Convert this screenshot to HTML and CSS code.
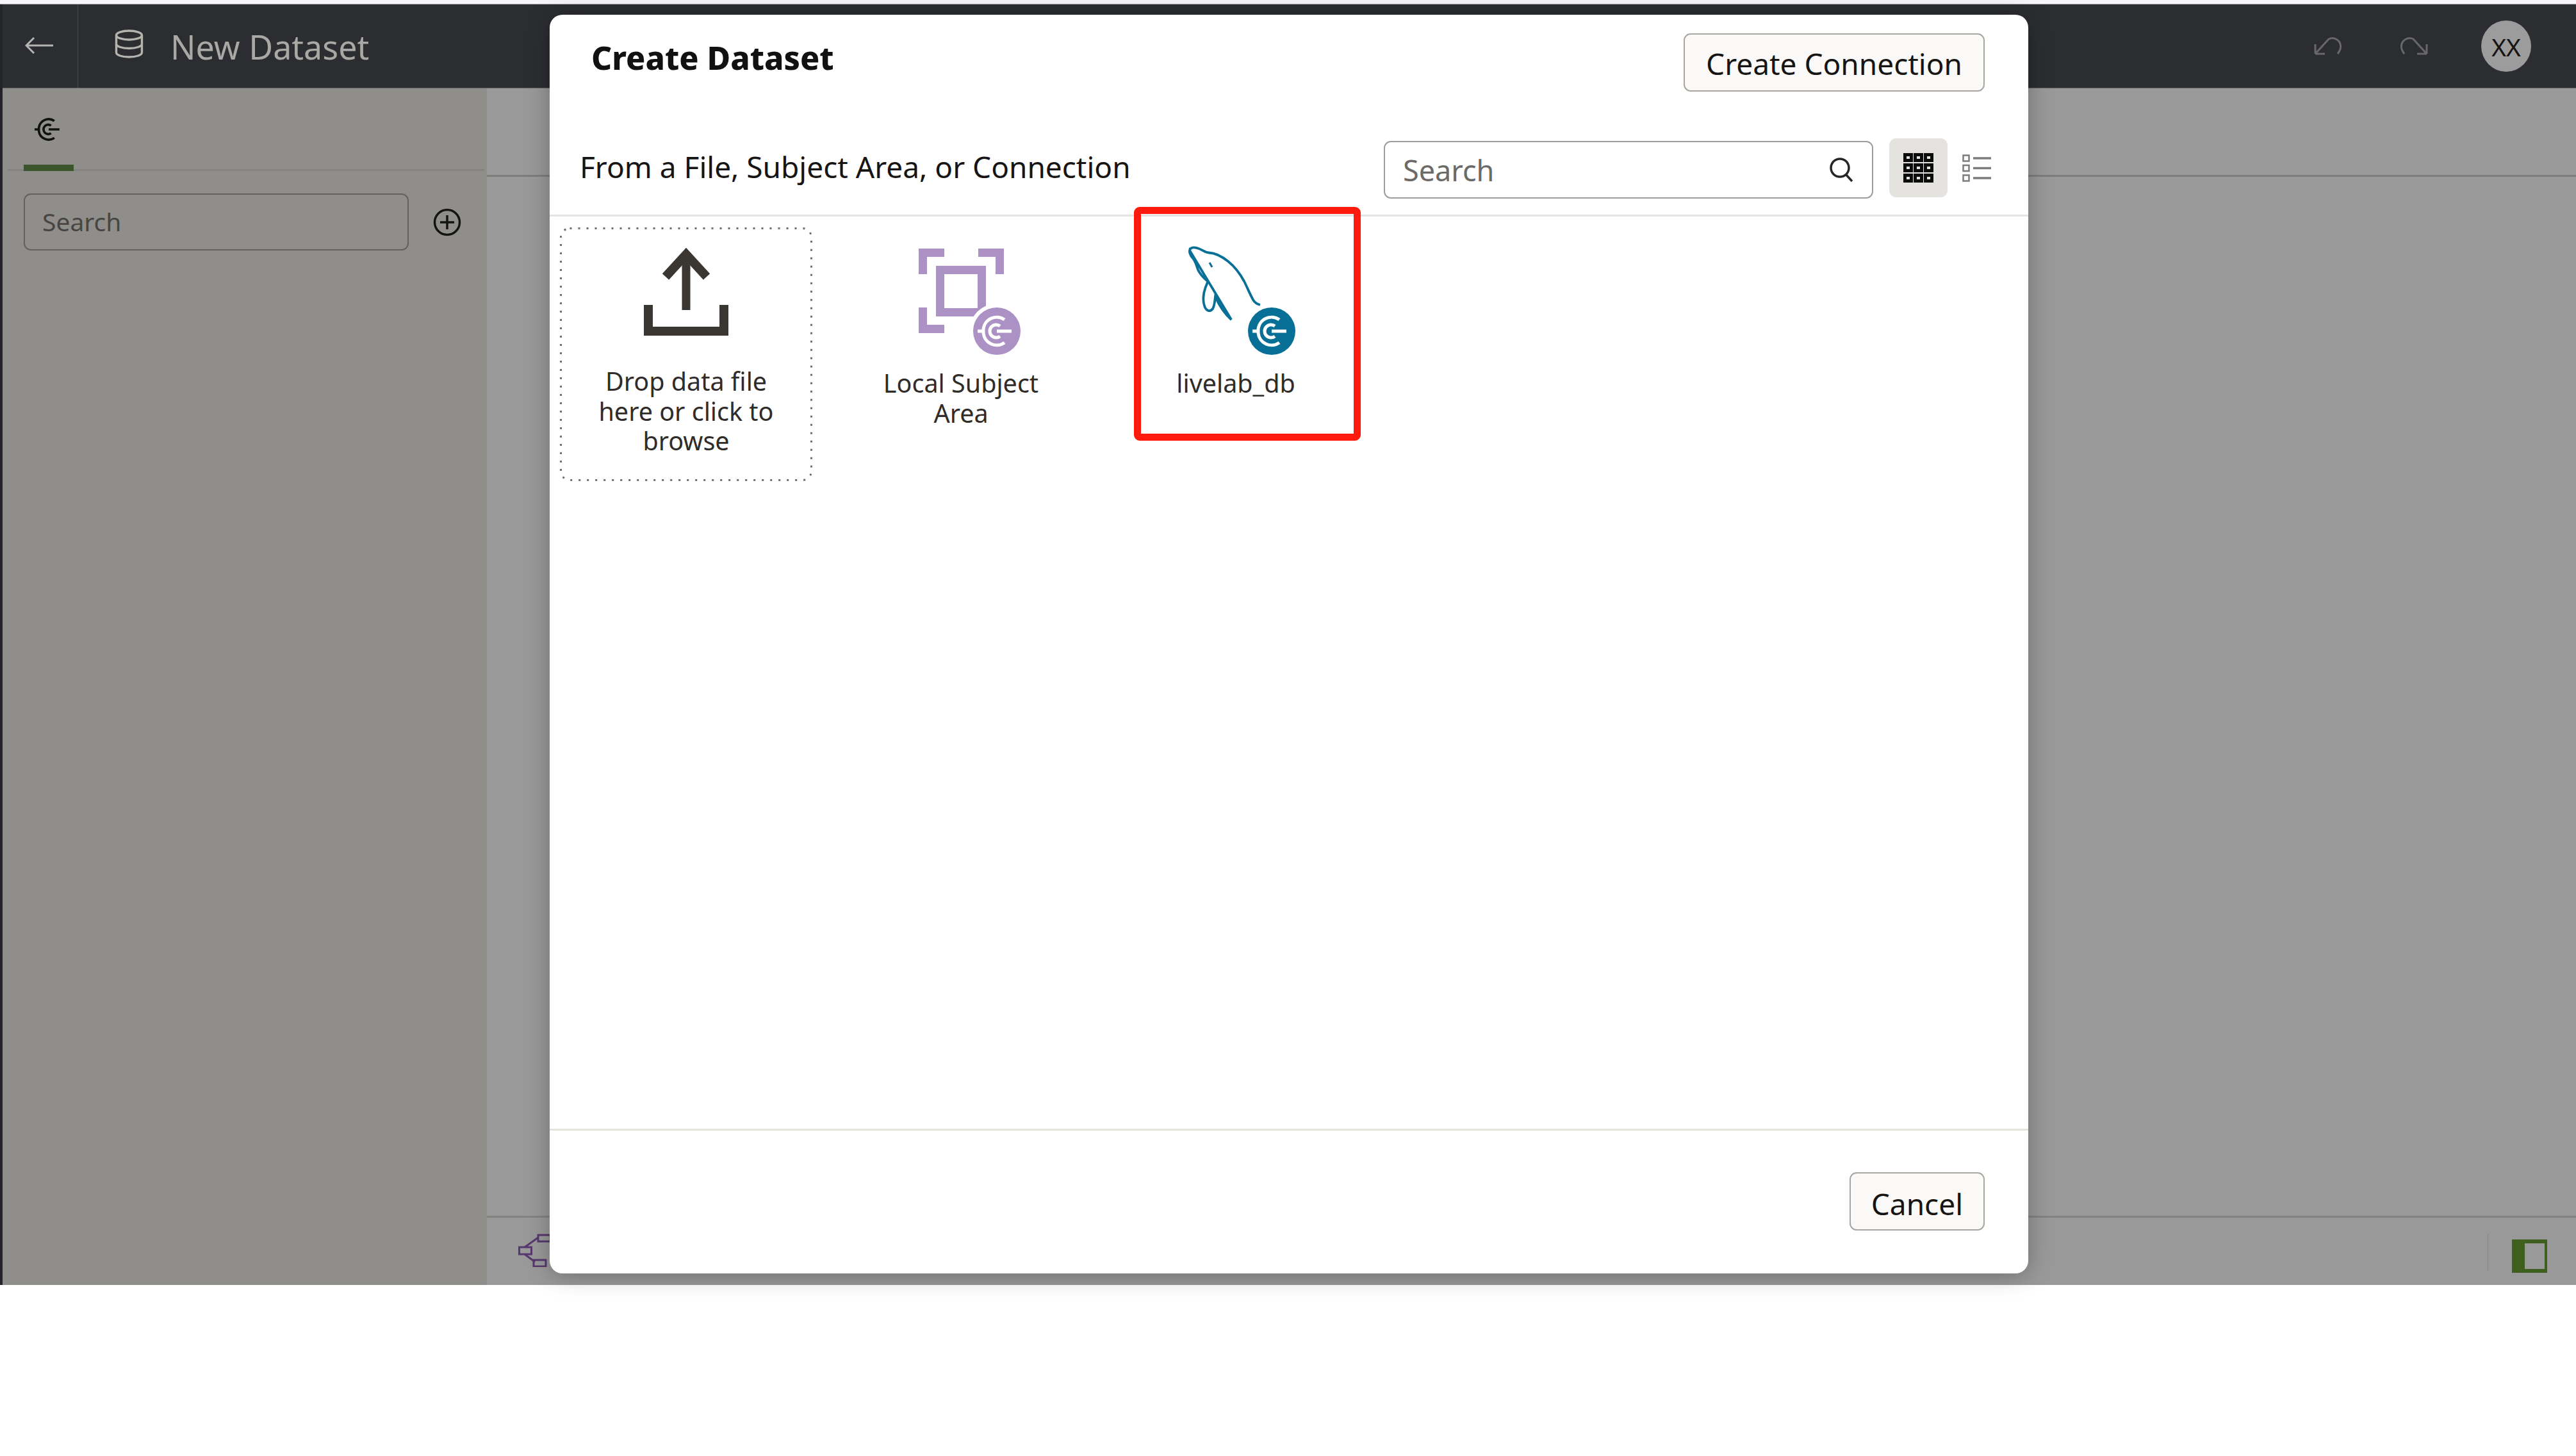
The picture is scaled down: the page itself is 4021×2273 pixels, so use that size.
FILE: index.html
```html
<!DOCTYPE html>
<html lang="en">
<head>
<meta charset="utf-8">
<title>Create Dataset</title>
<link rel="stylesheet" href="styles.css">
</head>
<body>
<svg class="defs" width="0" height="0" aria-hidden="true">
  <symbol id="conn" viewBox="-30 -30 60 60">
    <path d="M12 -18 A21 21 0 0 0 -21 -3 V3 A21 21 0 0 0 12 18" fill="none" stroke="currentColor" stroke-width="5"/>
    <path d="M5 -8 A10 10 0 1 0 5 8" fill="none" stroke="currentColor" stroke-width="5"/>
    <path d="M-30 0 H-19 M0 0 H23" fill="none" stroke="currentColor" stroke-width="5"/>
  </symbol>
</svg>
<div class="topstrip"></div>
<div class="app">
  <header class="header">
    <div class="back">
      <svg class="ico-back" viewBox="0 0 44 26"><path d="M44 13H3M14 1 2 13l12 12" fill="none" stroke="#b4b4b2" stroke-width="3"/></svg>
    </div>
    <svg class="ico-db" viewBox="0 0 45 45"><g fill="none" stroke="#b4b3ae" stroke-width="3.4"><ellipse cx="22.5" cy="9" rx="20" ry="7"/><path d="M2.5 9v27c0 4 9 7 20 7s20-3 20-7V9M2.5 22.500c0 4 9 7 20 7s20-3 20-7"/></g></svg>
    <span class="page-title">New Dataset</span>
    <div class="header-right">
      <svg class="ico-undo" viewBox="0 0 47 30"><path d="M3 27 V12 M3 27 H18 M3 27 L24 4 C36 -2 50 12 38 27" fill="none" stroke="#68686a" stroke-width="3"/></svg>
      <svg class="ico-redo" viewBox="0 0 47 30"><path d="M44 27 V12 M44 27 H29 M44 27 L23 4 C11 -2 -3 12 9 27" fill="none" stroke="#68686a" stroke-width="3"/></svg>
      <div class="avatar">XX</div>
    </div>
  </header>
  <div class="workspace">
    <aside class="sidebar">
      <div class="tabs">
        <div class="tab"><svg class="ico-tab"><use href="#conn"/></svg></div>
      </div>
      <div class="side-search">
        <div class="side-input">Search</div>
        <svg class="ico-plus" viewBox="0 0 44 44"><circle cx="22" cy="22" r="19.500" fill="none" stroke="#141414" stroke-width="3.5"/><path d="M22 11v22M11 22h22" stroke="#141414" stroke-width="3.500"/></svg>
      </div>
    </aside>
    <main class="main">
      <div class="main-top"></div>
      <div class="main-mid"></div>
      <div class="main-bottom">
        <svg class="ico-tree" viewBox="0 0 50 52"><g fill="none" stroke="#57386e" stroke-width="3"><rect x="1.500" y="21" width="19" height="11"/><rect x="31" y="2" width="19" height="10"/><rect x="24" y="41" width="19" height="10"/><path d="M10 21 31 6M10 32 26 44"/></g></svg>
        <div class="bar-divider"></div>
        <svg class="ico-panel" viewBox="0 0 55 52"><path fill="#3f5f1e" fill-rule="evenodd" d="M0 0h55v52H0zM20 6v40h31V6z"/></svg>
      </div>
    </main>
  </div>
</div>

<section class="modal">
  <div class="modal-top">
    <h1 class="modal-title">Create Dataset</h1>
    <button class="btn btn-connection">Create Connection</button>
  </div>
  <div class="filter-row">
    <div class="filter-label">From a File, Subject Area, or Connection</div>
    <div class="search">
      <span class="search-text">Search</span>
      <svg class="ico-search" viewBox="0 0 40 38"><circle cx="18" cy="16" r="14" fill="none" stroke="#262626" stroke-width="3.500"/><path d="M27 26l10 11" stroke="#262626" stroke-width="3.500"/></svg>
    </div>
    <div class="view-btn view-btn-on">
      <svg class="ico-grid" viewBox="0 0 47 46">
        <g fill="#0c0c0c"><rect width="15" height="14"/><rect x="16" width="15" height="14"/><rect x="32" width="15" height="14"/><rect y="16" width="15" height="14"/><rect x="16" y="16" width="15" height="14"/><rect x="32" y="16" width="15" height="14"/><rect y="32" width="15" height="14"/><rect x="16" y="32" width="15" height="14"/><rect x="32" y="32" width="15" height="14"/></g>
        <g fill="#e5e3df"><rect x="5" y="5" width="5" height="4"/><rect x="21" y="5" width="5" height="4"/><rect x="37" y="5" width="5" height="4"/><rect x="5" y="21" width="5" height="4"/><rect x="21" y="21" width="5" height="4"/><rect x="37" y="21" width="5" height="4"/><rect x="5" y="37" width="5" height="4"/><rect x="21" y="37" width="5" height="4"/><rect x="37" y="37" width="5" height="4"/></g>
      </svg>
    </div>
    <div class="view-btn">
      <svg class="ico-list" viewBox="0 0 45 43"><g fill="none" stroke="#7c7c7c" stroke-width="2.500"><rect x="1.500" y="1.500" width="9" height="9"/><rect x="1.500" y="17" width="9" height="9"/><rect x="1.500" y="32.500" width="9" height="9"/></g><path d="M17 6h28M17 21.500h28M17 37h28" stroke="#7c7c7c" stroke-width="3.500"/></svg>
    </div>
  </div>

  <div class="tiles">
    <div class="tile tile-drop">
      <svg class="tile-dots"><rect x="1.500" y="1.500" width="391" height="393" rx="14" fill="none" stroke="#6f6f6f" stroke-width="3" stroke-dasharray="3 10" stroke-linecap="butt"/></svg>
      <svg class="tile-icon" viewBox="0 0 200 176">
        <path d="M41 95v41h118V95" fill="none" stroke="#3a3631" stroke-width="14"/>
        <path d="M100 103V20" stroke="#3a3631" stroke-width="13" fill="none"/>
        <path d="M68 51 100 16l32 35" stroke="#3a3631" stroke-width="14" fill="none"/>
      </svg>
      <div class="tile-label">Drop data file here or click to browse</div>
    </div>
    <div class="tile">
      <svg class="tile-icon" viewBox="0 0 200 176">
        <g fill="none" stroke="#ac92c4" stroke-width="13">
          <path d="M74 13.500H40.500V47M127 13.500h33.500V47M40.500 99v33.500H74"/>
          <rect x="67.500" y="40.500" width="65" height="66"/>
        </g>
        <circle cx="156" cy="136" r="43" fill="#fff"/>
        <circle cx="156" cy="136" r="37" fill="#ac92c4"/>
        <svg x="126" y="106" width="60" height="60" color="#fff"><use href="#conn"/></svg>
      </svg>
      <div class="tile-label tile-label-low">Local Subject Area</div>
    </div>
    <div class="tile">
      <svg class="tile-icon" viewBox="0 0 200 176">
        <path d="M28 10C29 5 35 4 42 7C48 9 51 13 58 13.500C68 14 78 19 88 27C98 35 107 47 113 58C118 68 122 78 127 87C130 92 134 94 138 95M93 118C84 110 75 98 68 82C67 90 67 96 64 101C60 106 55 105 52 99C48 90 49 78 52 70C53 65 56 62 56 58C50 53 44 47 41 40C38 32 37 26 32 21C29 17 27 14 28 10Z" fill="none" stroke="#086f96" stroke-width="3.800"/>
        <path d="M59 29 63 36" stroke="#086f96" stroke-width="3"/>
        <circle cx="156" cy="136" r="37" fill="#086f96"/>
        <svg x="126" y="106" width="60" height="60" color="#fff"><use href="#conn"/></svg>
      </svg>
      <div class="tile-label tile-label-low">livelab_db</div>
    </div>
  </div>

  <div class="modal-foot">
    <button class="btn btn-cancel">Cancel</button>
  </div>
  <div class="highlight"></div>
</section>
</body>
</html>
```
FILE: styles.css
```css
* { box-sizing: border-box; }
html, body { margin: 0; padding: 0; }
body {
  position: relative;
  height: 2273px;
  overflow: hidden;
  background: #fff;
  font-family: "Noto Sans", "Open Sans", sans-serif;
  color: #161513;
}
.defs { position: absolute; }

.topstrip {
  height: 7px;
  background: #f7f7fa;
  border-bottom: 1px solid #9a9a9a;
}
.app {
  height: 1999px;
  display: flex;
  flex-direction: column;
  border-left: 4px solid #23242a;
  background: #999;
}

/* header */
.header {
  height: 131px;
  flex: none;
  display: flex;
  align-items: center;
  background: #2c2d31;
  border-bottom: 1px solid #6a6a68;
}
.back {
  width: 118px;
  height: 100%;
  display: flex;
  align-items: center;
  padding: 0 0 2px 35px;
  border-right: 1px solid #48494c;
}
.ico-back { width: 44px; height: 26px; }
.ico-db { width: 45px; height: 45px; margin: 0 0 8px 57px; }
.page-title {
  margin-left: 42px;
  font-size: 52px;
  color: #a9a8a4;
}
.header-right {
  margin-left: auto;
  display: flex;
  align-items: center;
  padding-right: 70px;
}
.ico-undo { width: 47px; height: 30px; margin-right: 86px; }
.ico-redo { width: 47px; height: 30px; margin-right: 82px; }
.avatar {
  width: 78px;
  height: 80px;
  border-radius: 50%;
  background: #9c9c9c;
  display: flex;
  align-items: center;
  justify-content: center;
  font-size: 39px;
  color: #161513;
}

/* workspace */
.workspace { flex: 1; display: flex; min-height: 0; }
.sidebar {
  width: 756px;
  flex: none;
  background: #8f8e8b;
}
.tabs {
  height: 129px;
  margin: 0 4px 0 8px;
  padding-left: 25px;
  border-bottom: 3px solid #858481;
}
.tab {
  width: 78px;
  height: 129px;
  display: flex;
  justify-content: center;
  padding-top: 42px;
  border-bottom: 10px solid #3b5429;
}
.ico-tab { width: 44px; height: 44px; color: #111; }
.side-search {
  display: flex;
  align-items: center;
  gap: 38px;
  margin-top: 35px;
  padding-left: 33px;
}
.side-input {
  width: 601px;
  height: 89px;
  padding: 0 27px 3px;
  display: flex;
  align-items: center;
  border: 2px solid #62615f;
  border-radius: 11px;
  font-size: 39px;
  color: #474643;
}
.ico-plus { width: 44px; height: 44px; }

.main { flex: 1; display: flex; flex-direction: column; background: #999; }
.main-top { height: 138px; flex: none; border-bottom: 3px solid #7e7d7a; }
.main-mid { flex: 1; }
.main-bottom {
  height: 108px;
  flex: none;
  display: flex;
  align-items: flex-start;
  border-top: 3px solid #858482;
  padding: 25px 45px 0 49px;
}
.ico-tree { width: 50px; height: 52px; }
.bar-divider { width: 1px; height: 58px; margin-left: auto; background: #858482; }
.ico-panel { width: 55px; height: 52px; margin: 9px 0 0 37px; }

/* modal */
.modal {
  position: absolute;
  left: 858px;
  top: 23px;
  width: 2308px;
  height: 1965px;
  display: flex;
  flex-direction: column;
  background: #fff;
  border-radius: 20px;
  box-shadow: 0 3px 36px rgba(0, 0, 0, .28);
}
.modal-top {
  display: flex;
  justify-content: space-between;
  align-items: flex-start;
  padding: 29px 68px 0 65px;
}
.modal-title {
  margin: 8px 0 0;
  font-size: 50px;
  line-height: 60px;
  font-weight: 800;
  color: #111;
}
.btn {
  height: 91px;
  padding: 6px 34px 0;
  font-family: inherit;
  font-size: 46px;
  color: #161513;
  background: #fbf9f8;
  border: 2px solid #a9a5a0;
  border-radius: 11px;
}
.btn-connection { padding: 3px 33px 0; }
.btn-cancel { padding: 6px 32px 0; }

.filter-row {
  display: flex;
  align-items: flex-start;
  padding: 73px 35px 25px 47px;
  border-bottom: 3px solid #e6e4e1;
}
.filter-label {
  flex: 1;
  font-size: 46px;
  line-height: 88px;
  color: #161513;
}
.search {
  width: 764px;
  height: 90px;
  margin-top: 4px;
  margin-right: 25px;
  padding: 0 28px;
  display: flex;
  align-items: center;
  justify-content: space-between;
  border: 2px solid #a09c97;
  border-radius: 11px;
}
.search-text { font-size: 45px; color: #6b6a68; }
.ico-search { width: 40px; height: 38px; }
.view-btn {
  width: 91px;
  height: 92px;
  display: flex;
  align-items: center;
  justify-content: center;
  border-radius: 11px;
}
.view-btn-on { background: #e5e3df; }
.ico-grid { width: 47px; height: 46px; }
.ico-list { width: 45px; height: 43px; }

/* tiles */
.tiles {
  flex: 1;
  display: flex;
  align-items: flex-start;
  gap: 35px;
  padding: 17px 0 0 16px;
}
.tile {
  position: relative;
  width: 394px;
  height: 396px;
  flex: none;
  display: flex;
  flex-direction: column;
  align-items: center;
  padding: 26px 50px 0;
}
.tile-dots { position: absolute; left: 0; top: 0; width: 394px; height: 396px; }
.tile-icon { width: 200px; height: 176px; flex: none; }
.tile-label {
  margin-top: 15px;
  font-size: 39.5px;
  line-height: 46.5px;
  text-align: center;
  color: #2f2c29;
}
.tile-label-low { margin-top: 18px; }

.modal-foot {
  height: 226px;
  flex: none;
  display: flex;
  justify-content: flex-end;
  align-items: flex-start;
  padding: 65px 68px 0 0;
  border-top: 3px solid #e6e2de;
}

.highlight {
  position: absolute;
  left: 912px;
  top: 300px;
  width: 354px;
  height: 365px;
  border: 11px solid #fe1a0c;
  border-radius: 9px;
}
```
